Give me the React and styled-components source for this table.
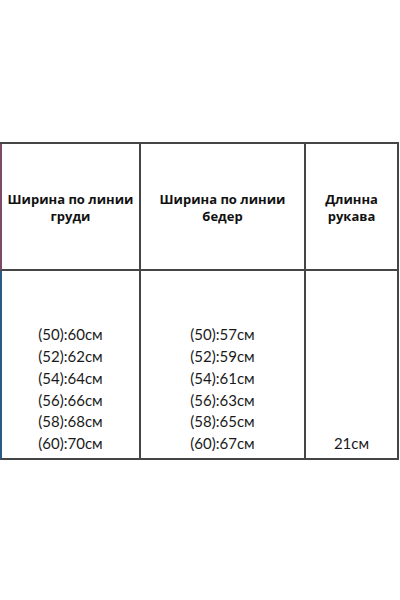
import React from "react";
import styled, { createGlobalStyle } from "styled-components";

const Global = createGlobalStyle`
  body {
    margin: 0;
    background: #fff;
  }
`;

const Page = styled.div`
  width: 400px;
  height: 600px;
  padding-top: 142px;
  box-sizing: border-box;
  background: #fff;
`;

const Grid = styled.div`
  display: grid;
  grid-template-columns: 141px 165px 93px;
  border-top: 2px solid #454545;
  width: 399px;
`;

const Cell = styled.div`
  border-right: 2px solid #454545;
  border-bottom: 2px solid #454545;
  border-left: ${(p) => (p.$edge ? `2px solid ${p.$edge}` : "none")};
  box-sizing: border-box;
  display: flex;
  flex-direction: column;
  align-items: center;
  text-align: center;
`;

const HeadCell = styled(Cell)`
  height: 127px;
  justify-content: center;
  padding: 2px 4px 0;
  font-family: "Open Sans", sans-serif;
  font-weight: 700;
  font-size: 13px;
  line-height: 17px;
  color: #111;
`;

const BodyCell = styled(Cell)`
  height: 189px;
  justify-content: flex-end;
  padding-bottom: 3px;
  font-family: "Lato", sans-serif;
  font-size: 15px;
  line-height: 21.8px;
  color: #1a1a1a;
`;

const Line = styled.div``;

const chest = ["(50):60см", "(52):62см", "(54):64см", "(56):66см", "(58):68см", "(60):70см"];
const hips = ["(50):57см", "(52):59см", "(54):61см", "(56):63см", "(58):65см", "(60):67см"];

export default function App() {
  return (
    <Page>
      <Global />
      <Grid>
        <HeadCell $edge="#7a4a66">
          Ширина по линии
          <br />
          груди
        </HeadCell>
        <HeadCell>
          Ширина по линии
          <br />
          бедер
        </HeadCell>
        <HeadCell>
          Длинна
          <br />
          рукава
        </HeadCell>
        <BodyCell $edge="#2c5a86">
          {chest.map((t) => (
            <Line key={t}>{t}</Line>
          ))}
        </BodyCell>
        <BodyCell>
          {hips.map((t) => (
            <Line key={t}>{t}</Line>
          ))}
        </BodyCell>
        <BodyCell>
          <Line>21см</Line>
        </BodyCell>
      </Grid>
    </Page>
  );
}
